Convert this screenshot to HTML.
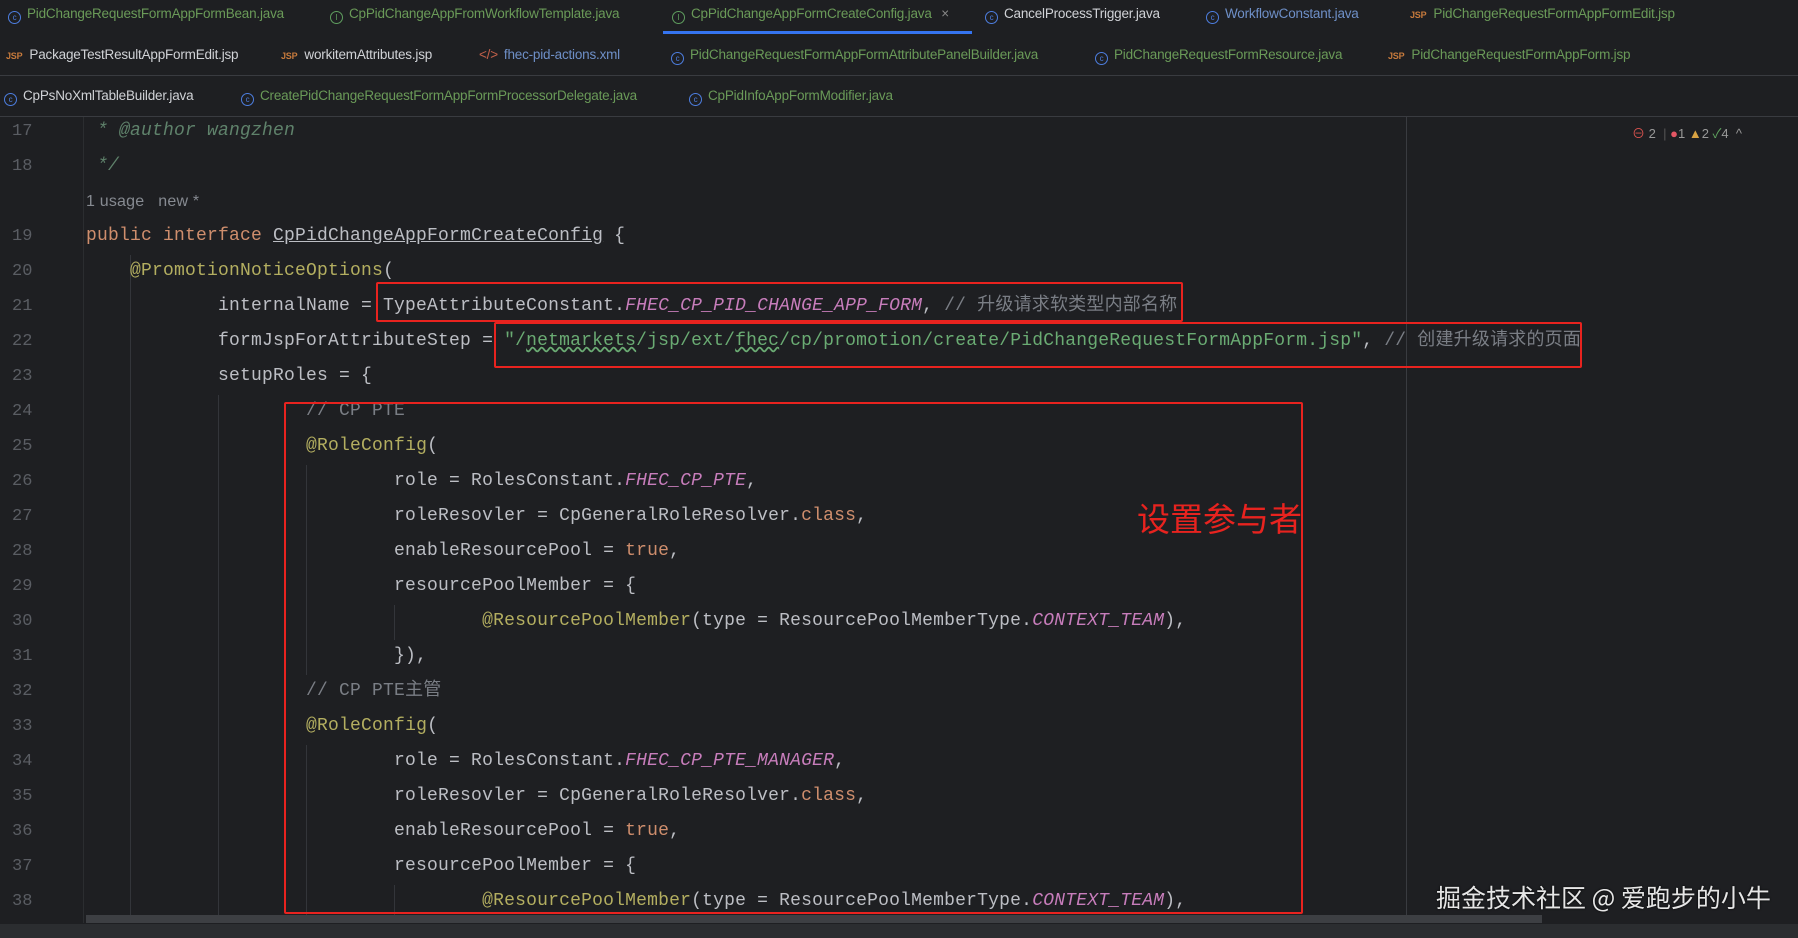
<!DOCTYPE html>
<html><head><meta charset="utf-8"><style>
body{margin:0;width:1798px;height:938px;background:#1e1f22;overflow:hidden;position:relative;font-family:"Liberation Sans","Noto Sans CJK SC",sans-serif}
.tr{position:absolute;left:0;width:1798px;height:40px;border-bottom:1px solid #393b40;background:#1e1f22}
.t{position:absolute;top:0;font-size:13.5px;line-height:40px;white-space:nowrap;letter-spacing:-0.2px}
.ic{display:inline-block;width:11px;height:11px;border:1.3px solid #4d7ee0;border-radius:50%;font-size:8px;line-height:11px;text-align:center;color:#4d7ee0;margin-right:6px;vertical-align:-2px}
.ic.i{border-color:#5f9e5f;color:#5f9e5f}
.jsp{font-size:9px;color:#c77a3c;margin-right:7px;font-weight:bold}
.g{color:#6a9a58}.b{color:#6e8fc7}.w{color:#d0d2d6}
.ln{position:absolute;left:0;width:40px;text-align:left;padding-left:12px;color:#5a5d63;font-family:"Liberation Mono",monospace;font-size:17px}
.row{position:absolute;left:86px;height:35px;line-height:35px;white-space:pre;font-family:"Liberation Mono","Noto Sans CJK SC",monospace;font-size:18px;letter-spacing:0.2px;color:#bcbec4}
.k{color:#cf8e6d}.a{color:#b3ae60}.c{color:#c77dbb;font-style:italic}.s{color:#6aab73}.cm{color:#7a7e85}.dc{color:#5f826b;font-style:italic}
.u{text-decoration:underline wavy #6aab73}
.box{position:absolute;border:2.5px solid #e8231f;border-radius:2px}
.guide{position:absolute;width:1px;background:#33353a}
</style></head><body>
<div class="tr" style="top:0;height:35px">
<div class="t g" style="left:8px;line-height:28px"><span class="ic">c</span>PidChangeRequestFormAppFormBean.java</div>
<div class="t g" style="left:330px;line-height:28px"><span class="ic i">I</span>CpPidChangeAppFromWorkflowTemplate.java</div>
<div class="t g" style="left:672px;line-height:28px"><span class="ic i">I</span>CpPidChangeAppFormCreateConfig.java <span style="color:#888;margin-left:6px">×</span></div>
<div class="t w" style="left:985px;line-height:28px"><span class="ic">c</span>CancelProcessTrigger.java</div>
<div class="t b" style="left:1206px;line-height:28px"><span class="ic">c</span>WorkflowConstant.java</div>
<div class="t g" style="left:1410px;line-height:28px"><span class="jsp">JSP</span>PidChangeRequestFormAppFormEdit.jsp</div>
<div style="position:absolute;left:663px;top:31px;width:309px;height:3px;background:#3574f0"></div>
</div>
<div class="tr" style="top:35px">
<div class="t w" style="left:6px"><span class="jsp">JSP</span>PackageTestResultAppFormEdit.jsp</div>
<div class="t w" style="left:281px"><span class="jsp">JSP</span>workitemAttributes.jsp</div>
<div class="t b" style="left:479px"><span style="color:#c2604a;margin-right:6px">&lt;/&gt;</span>fhec-pid-actions.xml</div>
<div class="t g" style="left:671px"><span class="ic">c</span>PidChangeRequestFormAppFormAttributePanelBuilder.java</div>
<div class="t g" style="left:1095px"><span class="ic">c</span>PidChangeRequestFormResource.java</div>
<div class="t g" style="left:1388px"><span class="jsp">JSP</span>PidChangeRequestFormAppForm.jsp</div>
</div>
<div class="tr" style="top:76px">
<div class="t w" style="left:4px"><span class="ic">c</span>CpPsNoXmlTableBuilder.java</div>
<div class="t g" style="left:241px"><span class="ic">c</span>CreatePidChangeRequestFormAppFormProcessorDelegate.java</div>
<div class="t g" style="left:689px"><span class="ic">c</span>CpPidInfoAppFormModifier.java</div>
</div>
<div style="position:absolute;left:83px;top:117px;width:1px;height:806px;background:#2b2d30"></div>
<div style="position:absolute;left:1406px;top:117px;width:1px;height:806px;background:#393b40"></div>
<div style="position:absolute;left:1632px;top:123px;font-size:13px;color:#999;white-space:nowrap"><span style="color:#d9534f">⊖</span> 2 &nbsp;<span style="color:#555">|</span> <span style="color:#e55765">●</span>1 <span style="color:#d9a343">▲</span>2 <span style="color:#5fa35f">✓</span>4 &nbsp;^</div>
<div class="guide" style="left:130px;top:255px;height:665px"></div>
<div class="guide" style="left:218px;top:395px;height:525px"></div>
<div class="guide" style="left:306px;top:465px;height:210px"></div>
<div class="guide" style="left:306px;top:745px;height:175px"></div>
<div class="guide" style="left:394px;top:605px;height:35px"></div>
<div class="guide" style="left:394px;top:885px;height:35px"></div>

<div class="ln" style="top:114px;line-height:35px">17</div><div class="row" style="top:114px"><span class="dc"> * @author wangzhen</span></div>
<div class="ln" style="top:149px;line-height:35px">18</div><div class="row" style="top:149px"><span class="dc"> */</span></div>
<div class="row" style="top:184px;font-family:'Liberation Sans',sans-serif;font-size:16px;color:#868a91">1 usage &nbsp; new *</div>
<div class="ln" style="top:219px;line-height:35px">19</div><div class="row" style="top:219px"><span class="k">public interface </span><span style="text-decoration:underline">CpPidChangeAppFormCreateConfig</span> {</div>
<div class="ln" style="top:254px;line-height:35px">20</div><div class="row" style="top:254px">    <span class="a">@PromotionNoticeOptions</span>(</div>
<div class="ln" style="top:289px;line-height:35px">21</div><div class="row" style="top:289px">            internalName = TypeAttributeConstant.<span class="c">FHEC_CP_PID_CHANGE_APP_FORM</span>, <span class="cm">// 升级请求软类型内部名称</span></div>
<div class="ln" style="top:324px;line-height:35px">22</div><div class="row" style="top:324px">            formJspForAttributeStep = <span class="s">"/<span class="u">netmarkets</span>/jsp/ext/<span class="u">fhec</span>/cp/promotion/create/PidChangeRequestFormAppForm.jsp"</span>, <span class="cm">// 创建升级请求的页面</span></div>
<div class="ln" style="top:359px;line-height:35px">23</div><div class="row" style="top:359px">            setupRoles = {</div>
<div class="ln" style="top:394px;line-height:35px">24</div><div class="row" style="top:394px">                    <span class="cm">// CP PTE</span></div>
<div class="ln" style="top:429px;line-height:35px">25</div><div class="row" style="top:429px">                    <span class="a">@RoleConfig</span>(</div>
<div class="ln" style="top:464px;line-height:35px">26</div><div class="row" style="top:464px">                            role = RolesConstant.<span class="c">FHEC_CP_PTE</span>,</div>
<div class="ln" style="top:499px;line-height:35px">27</div><div class="row" style="top:499px">                            roleResovler = CpGeneralRoleResolver.<span class="k">class</span>,</div>
<div class="ln" style="top:534px;line-height:35px">28</div><div class="row" style="top:534px">                            enableResourcePool = <span class="k">true</span>,</div>
<div class="ln" style="top:569px;line-height:35px">29</div><div class="row" style="top:569px">                            resourcePoolMember = {</div>
<div class="ln" style="top:604px;line-height:35px">30</div><div class="row" style="top:604px">                                    <span class="a">@ResourcePoolMember</span>(type = ResourcePoolMemberType.<span class="c">CONTEXT_TEAM</span>),</div>
<div class="ln" style="top:639px;line-height:35px">31</div><div class="row" style="top:639px">                            }),</div>
<div class="ln" style="top:674px;line-height:35px">32</div><div class="row" style="top:674px">                    <span class="cm">// CP PTE主管</span></div>
<div class="ln" style="top:709px;line-height:35px">33</div><div class="row" style="top:709px">                    <span class="a">@RoleConfig</span>(</div>
<div class="ln" style="top:744px;line-height:35px">34</div><div class="row" style="top:744px">                            role = RolesConstant.<span class="c">FHEC_CP_PTE_MANAGER</span>,</div>
<div class="ln" style="top:779px;line-height:35px">35</div><div class="row" style="top:779px">                            roleResovler = CpGeneralRoleResolver.<span class="k">class</span>,</div>
<div class="ln" style="top:814px;line-height:35px">36</div><div class="row" style="top:814px">                            enableResourcePool = <span class="k">true</span>,</div>
<div class="ln" style="top:849px;line-height:35px">37</div><div class="row" style="top:849px">                            resourcePoolMember = {</div>
<div class="ln" style="top:884px;line-height:35px">38</div><div class="row" style="top:884px">                                    <span class="a">@ResourcePoolMember</span>(type = ResourcePoolMemberType.<span class="c">CONTEXT_TEAM</span>),</div>

<div class="box" style="left:376px;top:282px;width:803px;height:36px"></div>
<div class="box" style="left:494px;top:322px;width:1084px;height:42px"></div>
<div class="box" style="left:284px;top:402px;width:1015px;height:508px"></div>
<div style="position:absolute;left:1137px;top:495px;font-size:33px;color:#e8231f;font-family:'Noto Sans CJK SC',sans-serif;line-height:44px">设置参与者</div>
<div style="position:absolute;left:86px;top:915px;width:1456px;height:8px;background:#3d3f43"></div>
<div style="position:absolute;left:0;top:924px;width:1798px;height:14px;background:#2b2d30"></div>
<div style="position:absolute;left:1436px;top:880px;font-size:25px;color:#e6e6e6;font-family:'Noto Sans CJK SC',sans-serif;line-height:34px;white-space:nowrap;text-shadow:0 0 2px #000">掘金技术社区 @ 爱跑步的小牛</div>
</body></html>
